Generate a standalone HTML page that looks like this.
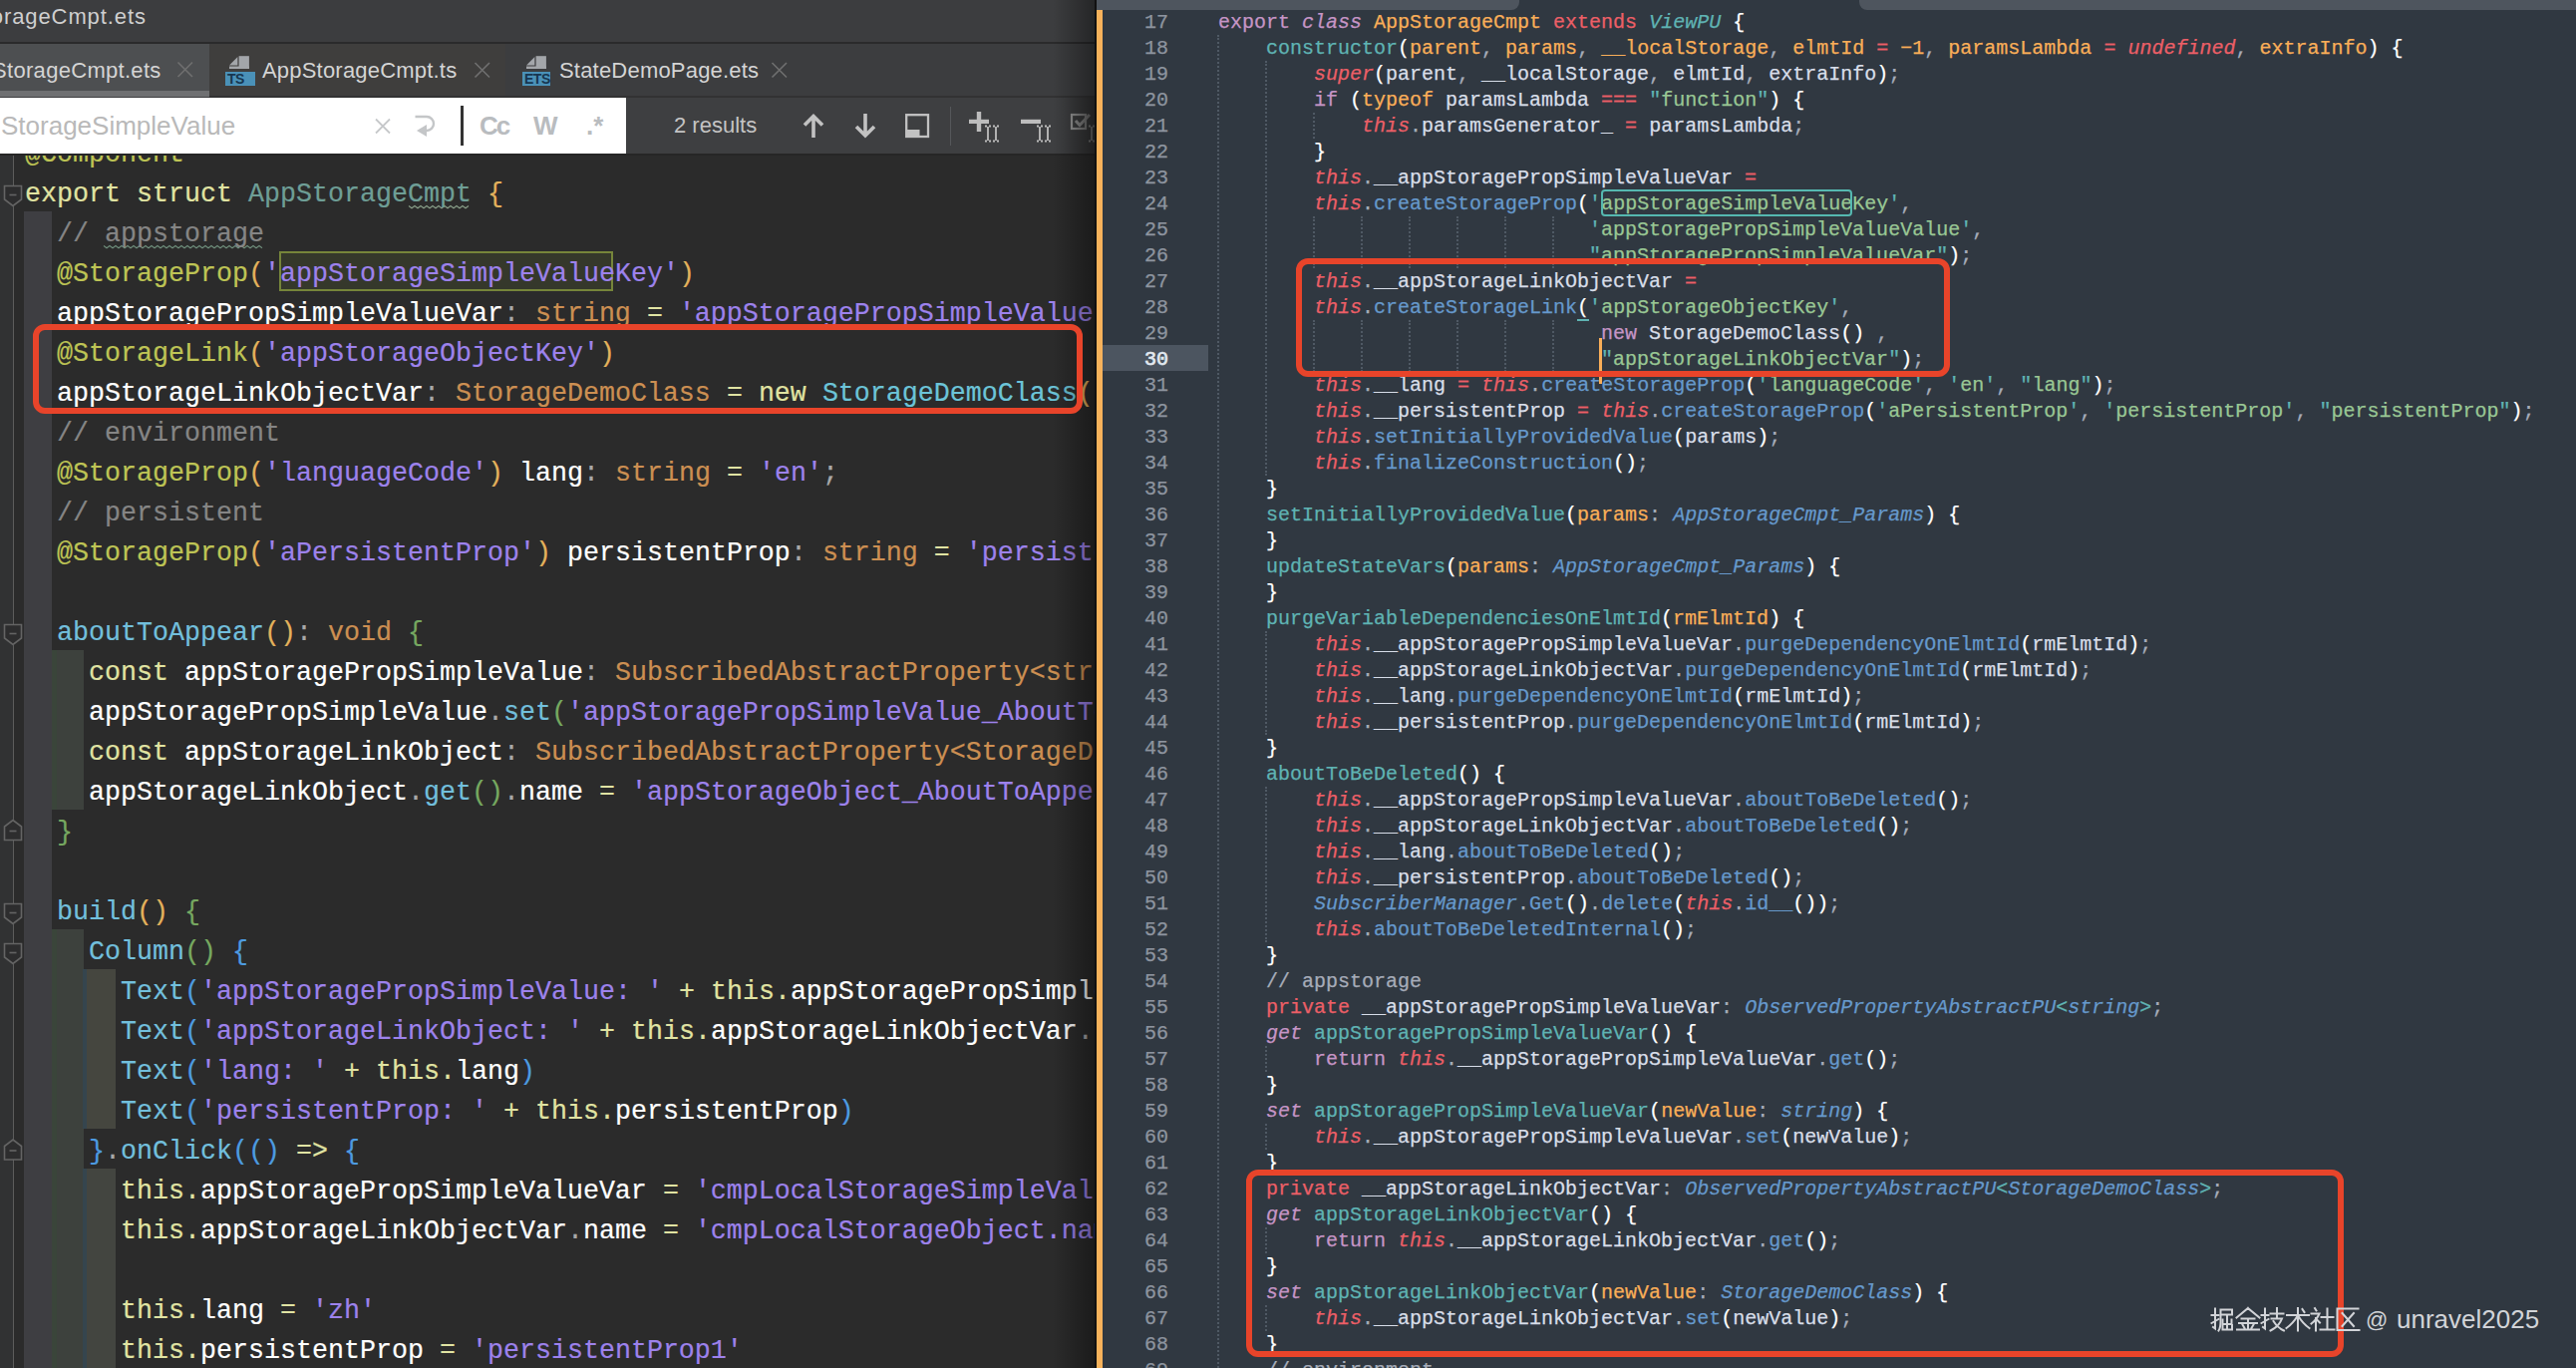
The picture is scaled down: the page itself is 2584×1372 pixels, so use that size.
<!DOCTYPE html><html><head><meta charset="utf-8"><style>
*{margin:0;padding:0;box-sizing:border-box}
html,body{width:2584px;height:1372px;overflow:hidden;background:#2b2b2b}
body{position:relative;font-family:"Liberation Sans",sans-serif}
.abs{position:absolute}
i{font-style:normal}
/* left */
#lp{position:absolute;left:0;top:0;width:1098px;height:1372px;overflow:hidden;background:#2b2b2b}
#rp{position:absolute;left:1098px;top:0;width:1486px;height:1372px;overflow:hidden;background:#303841}
.ll{position:absolute;left:25px;height:40px;line-height:40px;font-family:"Liberation Mono",monospace;font-size:26.667px;white-space:pre;color:#ffffff;-webkit-text-stroke:0.2px currentColor;transform:scaleY(1.05);transform-origin:0 27.1px}
.rl{position:absolute;left:124px;height:26px;line-height:26px;font-family:"Liberation Mono",monospace;font-size:20px;white-space:pre;color:#d8dee9;-webkit-text-stroke:0.25px currentColor}
.rn{position:absolute;left:0;width:74px;text-align:right;height:26px;line-height:26px;font-family:"Liberation Mono",monospace;font-size:20px;color:#8d949f;-webkit-text-stroke:0.25px currentColor}
/* left tokens */
.ll .ky{color:#e0e3a2}
.ll .an{color:#bec455}
.ll .st{color:#9d82ec}
.ll .pu{color:#a8a8a8}
.ll .ty{color:#cc8f52}
.ll .fn{color:#72bfdc}
.ll .cl{color:#6cc4d8}
.ll .sc{color:#6e9e96}
.ll .cm{color:#858585}
.ll .b1{color:#e3b15c}
.ll .b2{color:#76a860}
.ll .b3{color:#4d9be0}
/* right tokens */
.rl .pk{color:#c695c6}
.rl .pki{color:#c695c6;font-style:italic}
.rl .rd{color:#ec5f67}
.rl .rdi{color:#ec5f67;font-style:italic}
.rl .or{color:#f9ae58}
.rl .cy{color:#5fb3b3}
.rl .cyi{color:#5fb3b3;font-style:italic}
.rl .bl{color:#6699cc}
.rl .bli{color:#6699cc;font-style:italic}
.rl .gr{color:#99c794}
.rl .wb{color:#ffffff}
.rl .gy{color:#a6acb9}
.rl .cm{color:#a6acb9}
.redbox{position:absolute;border:6.5px solid #e8442a;border-radius:12px}
.guide{position:absolute;width:0;border-left:2px dotted #4f5964}
</style></head><body><div id="lp">
<div class="abs" style="left:0;top:0;width:1098px;height:43px;background:#3c3d3f"></div>
<div class="abs" style="left:0;top:42px;width:1098px;height:2px;background:#2a2a2b"></div>
<div class="abs" style="left:-73.6px;top:4px;font-size:22px;line-height:26px;color:#cfcfcf;letter-spacing:0.9px">AppStorageCmpt.ets</div>
<div class="abs" style="left:0;top:44px;width:1098px;height:54px;background:#3c3d3f"></div>
<div class="abs" style="left:210px;top:44px;width:297px;height:53px;background:#3f3e3d"></div>
<div class="abs" style="left:0;top:44px;width:210px;height:47px;background:#4d4f51"></div>
<div class="abs" style="left:0;top:91px;width:210px;height:6px;background:#6f7072"></div>
<div class="abs" style="left:-48px;top:58px;font-size:22px;line-height:26px;color:#d4d4d4;letter-spacing:0.3px">AppStorageCmpt.ets</div>
<svg class="abs" style="left:0;top:0" width="1098" height="100" viewBox="0 0 1098 100"><path d="M178.5 62.5 L193.0 77.0 M193.0 62.5 L178.5 77.0" stroke="#6f6f6f" stroke-width="1.6"/></svg>
<svg class="abs" style="left:226px;top:54px" width="32" height="34" viewBox="0 0 32 34"><g fill="#a3a6aa"><rect x="13.6" y="2.2" width="10.3" height="12.8"/><polygon points="4,11.6 12.4,3 12.4,11.6"/><rect x="4" y="12.5" width="20" height="2.5"/></g></svg><div class="abs" style="left:226px;top:72px;width:30px;height:14px;background:#4a91b8;color:#173650;font-size:14px;line-height:15px;font-weight:bold;padding-left:2px;letter-spacing:-0.5px">TS</div>
<div class="abs" style="left:263px;top:58px;font-size:22px;line-height:26px;color:#d4d4d4;letter-spacing:0.2px">AppStorageCmpt.ts</div>
<svg class="abs" style="left:0;top:0" width="1098" height="100" viewBox="0 0 1098 100"><path d="M476.5 63.0 L491.0 77.5 M491.0 63.0 L476.5 77.5" stroke="#6f6f6f" stroke-width="1.6"/></svg>
<svg class="abs" style="left:524px;top:54px" width="32" height="34" viewBox="0 0 32 34"><g fill="#a3a6aa"><rect x="13.6" y="2.2" width="10.3" height="12.8"/><polygon points="4,11.6 12.4,3 12.4,11.6"/><rect x="4" y="12.5" width="20" height="2.5"/></g></svg><div class="abs" style="left:524px;top:72px;width:28px;height:14px;background:#4a91b8;color:#173650;font-size:14px;line-height:15px;font-weight:bold;padding-left:2px;letter-spacing:-0.5px">ETS</div>
<div class="abs" style="left:561px;top:58px;font-size:22px;line-height:26px;color:#d4d4d4;letter-spacing:0.2px">StateDemoPage.ets</div>
<svg class="abs" style="left:0;top:0" width="1098" height="100" viewBox="0 0 1098 100"><path d="M774.5 63.0 L789.0 77.5 M789.0 63.0 L774.5 77.5" stroke="#6f6f6f" stroke-width="1.6"/></svg>
<div class="abs" style="left:210px;top:96px;width:888px;height:2px;background:#323233"></div>
<div class="abs" style="left:0;top:98px;width:1098px;height:56px;background:#3e3f41"></div>
<div class="abs" style="left:0;top:98px;width:628px;height:56px;background:#ffffff"></div>
<div class="abs" style="left:1px;top:111px;font-size:26px;line-height:30px;color:#b9b9b9">StorageSimpleValue</div>
<svg class="abs" style="left:0;top:0" width="1098" height="154" viewBox="0 0 1098 154"><g stroke="#c6c8ca" stroke-width="1.8" fill="none"><path d="M377 119.5 L391 133.5 M391 119.5 L377 133.5"/></g><g stroke="#c4c6c8" stroke-width="2.4" fill="none"><path d="M416.5 117 H428 A7 7 0 0 1 428 131 H424"/></g><path d="M418 131 L428 125 L428 137 Z" fill="#c4c6c8"/><g stroke="#c2c2c2" stroke-width="3.6" fill="none" stroke-linecap="butt"><path d="M816 116.5 V138 M807 125.5 L816 116.5 L825 125.5"/><path d="M868 114 V135.5 M859 127 L868 136 L877 127"/></g><rect x="909.2" y="115.2" width="21.8" height="21.8" stroke="#c2c2c2" stroke-width="2.3" fill="none"/><rect x="909" y="130" width="13.5" height="7.5" fill="#c2c2c2"/><g fill="#bdbdbd"><rect x="972" y="119.8" width="20" height="4.2"/><rect x="979.8" y="112" width="4.4" height="20"/><rect x="1024" y="119.8" width="20" height="4.2"/></g><g stroke="#bdbdbd" stroke-width="1.8" fill="none"><path d="M991 127 V141 M999 127 V141 M1043 127 V141 M1051 127 V141 M1095 127 V141"/></g><g fill="#bdbdbd"><rect x="988.0" y="125.5" width="2" height="2"/><rect x="988.0" y="140.5" width="2" height="2"/><rect x="992.0" y="125.5" width="2" height="2"/><rect x="992.0" y="140.5" width="2" height="2"/><rect x="996.0" y="125.5" width="2" height="2"/><rect x="996.0" y="140.5" width="2" height="2"/><rect x="1000.0" y="125.5" width="2" height="2"/><rect x="1000.0" y="140.5" width="2" height="2"/><rect x="1040.0" y="125.5" width="2" height="2"/><rect x="1040.0" y="140.5" width="2" height="2"/><rect x="1044.0" y="125.5" width="2" height="2"/><rect x="1044.0" y="140.5" width="2" height="2"/><rect x="1048.0" y="125.5" width="2" height="2"/><rect x="1048.0" y="140.5" width="2" height="2"/><rect x="1052.0" y="125.5" width="2" height="2"/><rect x="1052.0" y="140.5" width="2" height="2"/><rect x="1092.0" y="125.5" width="2" height="2"/><rect x="1092.0" y="140.5" width="2" height="2"/><rect x="1096.0" y="125.5" width="2" height="2"/><rect x="1096.0" y="140.5" width="2" height="2"/></g><rect x="1075" y="115" width="14" height="14" stroke="#a9a9a9" stroke-width="2.2" fill="none"/><path d="M1079 121 L1083 125.5 L1093 115" stroke="#a9a9a9" stroke-width="3" fill="none"/></svg>
<div class="abs" style="left:1066px;top:98px;width:32px;height:56px;background:linear-gradient(90deg,rgba(43,43,43,0),rgba(43,43,43,0.6))"></div>
<div class="abs" style="left:462px;top:106px;width:2.5px;height:40px;background:#333"></div>
<div class="abs" style="left:481px;top:111px;font-size:26px;line-height:30px;color:#b9bcbf;font-weight:bold;letter-spacing:-2px">Cc</div>
<div class="abs" style="left:535px;top:111px;font-size:26px;line-height:30px;color:#b9bcbf;font-weight:bold">W</div>
<div class="abs" style="left:588px;top:111px;font-size:26px;line-height:30px;color:#b9bcbf;font-weight:bold">.*</div>
<div class="abs" style="left:676px;top:113px;font-size:22px;line-height:26px;color:#c4c4c4">2 results</div>
<div class="abs" style="left:953px;top:107px;width:1px;height:39px;background:#55575a"></div>
<div class="abs" style="left:0;top:154px;width:13px;height:1218px;background:#313233"></div>
<div class="abs" style="left:12.5px;top:154px;width:1.6px;height:1218px;background:#5c5c5c"></div>
<div class="abs" style="left:24px;top:212px;width:28px;height:1160px;background:#3e3e42"></div>
<div class="abs" style="left:52px;top:652px;width:32px;height:160px;background:#3d413d"></div>
<div class="abs" style="left:52px;top:652px;width:5px;height:160px;background:#3a453a"></div>
<div class="abs" style="left:52px;top:932px;width:32px;height:440px;background:#3d413d"></div>
<div class="abs" style="left:52px;top:932px;width:5px;height:440px;background:#3a453a"></div>
<div class="abs" style="left:84px;top:972px;width:32px;height:160px;background:#45463f"></div>
<div class="abs" style="left:84px;top:1172px;width:32px;height:200px;background:#434540"></div>
<div class="abs" style="left:83px;top:972px;width:4px;height:160px;background:#35454e"></div>
<div class="abs" style="left:83px;top:1172px;width:4px;height:200px;background:#35454e"></div>
<svg class="abs" style="left:0;top:0" width="30" height="1372" viewBox="0 0 30 1372"><polygon points="4.5,186.5 21.5,186.5 21.5,200.0 13,206.5 4.5,200.0" fill="#2d2d2e" stroke="#646464" stroke-width="1.6"/><line x1="9.5" x2="16.5" y1="195.5" y2="195.5" stroke="#646464" stroke-width="1.6"/><polygon points="4.5,626.5 21.5,626.5 21.5,640.0 13,646.5 4.5,640.0" fill="#2d2d2e" stroke="#646464" stroke-width="1.6"/><line x1="9.5" x2="16.5" y1="635.5" y2="635.5" stroke="#646464" stroke-width="1.6"/><polygon points="4.5,842.5 21.5,842.5 21.5,829.0 13,822.5 4.5,829.0" fill="#2d2d2e" stroke="#646464" stroke-width="1.6"/><line x1="9.5" x2="16.5" y1="833.5" y2="833.5" stroke="#646464" stroke-width="1.6"/><polygon points="4.5,906.5 21.5,906.5 21.5,920.0 13,926.5 4.5,920.0" fill="#2d2d2e" stroke="#646464" stroke-width="1.6"/><line x1="9.5" x2="16.5" y1="915.5" y2="915.5" stroke="#646464" stroke-width="1.6"/><polygon points="4.5,946.5 21.5,946.5 21.5,960.0 13,966.5 4.5,960.0" fill="#2d2d2e" stroke="#646464" stroke-width="1.6"/><line x1="9.5" x2="16.5" y1="955.5" y2="955.5" stroke="#646464" stroke-width="1.6"/><polygon points="4.5,1163.0 21.5,1163.0 21.5,1149.5 13,1143.0 4.5,1149.5" fill="#2d2d2e" stroke="#646464" stroke-width="1.6"/><line x1="9.5" x2="16.5" y1="1154.0" y2="1154.0" stroke="#646464" stroke-width="1.6"/></svg>
<div class="abs" style="left:280px;top:252px;width:335px;height:40px;border:2.2px solid #76853a;background:#35382b"></div>
<svg class="abs" style="left:0;top:0" width="1098" height="400" viewBox="0 0 1098 400"><path d="M410.0 206.5 L413.0 208.7 L416.0 206.5 L419.0 208.7 L422.0 206.5 L425.0 208.7 L428.0 206.5 L431.0 208.7 L434.0 206.5 L437.0 208.7 L440.0 206.5 L443.0 208.7 L446.0 206.5 L449.0 208.7 L452.0 206.5 L455.0 208.7 L458.0 206.5 L461.0 208.7 L464.0 206.5 L467.0 208.7 L470.0 206.5" stroke="#8aa08a" stroke-width="1.1" fill="none"/><path d="M104.0 246.5 L107.0 248.7 L110.0 246.5 L113.0 248.7 L116.0 246.5 L119.0 248.7 L122.0 246.5 L125.0 248.7 L128.0 246.5 L131.0 248.7 L134.0 246.5 L137.0 248.7 L140.0 246.5 L143.0 248.7 L146.0 246.5 L149.0 248.7 L152.0 246.5 L155.0 248.7 L158.0 246.5 L161.0 248.7 L164.0 246.5 L167.0 248.7 L170.0 246.5 L173.0 248.7 L176.0 246.5 L179.0 248.7 L182.0 246.5 L185.0 248.7 L188.0 246.5 L191.0 248.7 L194.0 246.5 L197.0 248.7 L200.0 246.5 L203.0 248.7 L206.0 246.5 L209.0 248.7 L212.0 246.5 L215.0 248.7 L218.0 246.5 L221.0 248.7 L224.0 246.5 L227.0 248.7 L230.0 246.5 L233.0 248.7 L236.0 246.5 L239.0 248.7 L242.0 246.5 L245.0 248.7 L248.0 246.5 L251.0 248.7 L254.0 246.5 L257.0 248.7 L260.0 246.5 L263.0 248.7" stroke="#6f8f7c" stroke-width="1.1" fill="none"/></svg>
<div class="abs" style="left:0;top:154px;width:1098px;height:2px;background:#262626"></div>
<div class="abs" style="left:0;top:156px;width:1098px;height:1216px;overflow:hidden">
<div class="ll" style="top:-21.0px"><i class="an">@Component</i></div>
<div class="ll" style="top:19.0px"><i class="ky">export</i> <i class="ky">struct</i> <i class="sc">AppStorageCmpt</i> <i class="b1">{</i></div>
<div class="ll" style="top:59.0px">  <i class="cm">// appstorage</i></div>
<div class="ll" style="top:99.0px">  <i class="an">@StorageProp</i><i class="b1">(</i><i class="st">&#x27;appStorageSimpleValueKey&#x27;</i><i class="b1">)</i></div>
<div class="ll" style="top:139.0px">  appStoragePropSimpleValueVar<i class="pu">:</i> <i class="ty">string</i> <i class="ky">=</i> <i class="st">&#x27;appStoragePropSimpleValue&#x27;</i></div>
<div class="ll" style="top:179.0px">  <i class="an">@StorageLink</i><i class="b1">(</i><i class="st">&#x27;appStorageObjectKey&#x27;</i><i class="b1">)</i></div>
<div class="ll" style="top:219.0px">  appStorageLinkObjectVar<i class="pu">:</i> <i class="ty">StorageDemoClass</i> <i class="ky">=</i> <i class="ky">new</i> <i class="cl">StorageDemoClass</i><i class="b1">()</i></div>
<div class="ll" style="top:259.0px">  <i class="cm">// environment</i></div>
<div class="ll" style="top:299.0px">  <i class="an">@StorageProp</i><i class="b1">(</i><i class="st">&#x27;languageCode&#x27;</i><i class="b1">)</i> lang<i class="pu">:</i> <i class="ty">string</i> <i class="ky">=</i> <i class="st">&#x27;en&#x27;</i><i class="pu">;</i></div>
<div class="ll" style="top:339.0px">  <i class="cm">// persistent</i></div>
<div class="ll" style="top:379.0px">  <i class="an">@StorageProp</i><i class="b1">(</i><i class="st">&#x27;aPersistentProp&#x27;</i><i class="b1">)</i> persistentProp<i class="pu">:</i> <i class="ty">string</i> <i class="ky">=</i> <i class="st">&#x27;persistentProp&#x27;</i></div>
<div class="ll" style="top:419.0px"></div>
<div class="ll" style="top:459.0px">  <i class="fn">aboutToAppear</i><i class="b1">()</i><i class="pu">:</i> <i class="ty">void</i> <i class="b2">{</i></div>
<div class="ll" style="top:499.0px">    <i class="ky">const</i> appStoragePropSimpleValue<i class="pu">:</i> <i class="ty">SubscribedAbstractProperty&lt;string&gt;</i></div>
<div class="ll" style="top:539.0px">    appStoragePropSimpleValue<i class="pu">.</i><i class="fn">set</i><i class="b2">(</i><i class="st">&#x27;appStoragePropSimpleValue_AboutToAppear&#x27;</i><i class="b2">)</i></div>
<div class="ll" style="top:579.0px">    <i class="ky">const</i> appStorageLinkObject<i class="pu">:</i> <i class="ty">SubscribedAbstractProperty&lt;StorageDemoClass&gt;</i></div>
<div class="ll" style="top:619.0px">    appStorageLinkObject<i class="pu">.</i><i class="fn">get</i><i class="b2">()</i><i class="pu">.</i>name <i class="ky">=</i> <i class="st">&#x27;appStorageObject_AboutToAppear&#x27;</i></div>
<div class="ll" style="top:659.0px">  <i class="b2">}</i></div>
<div class="ll" style="top:699.0px"></div>
<div class="ll" style="top:739.0px">  <i class="fn">build</i><i class="b1">()</i> <i class="b2">{</i></div>
<div class="ll" style="top:779.0px">    <i class="fn">Column</i><i class="b2">()</i> <i class="b3">{</i></div>
<div class="ll" style="top:819.0px">      <i class="fn">Text</i><i class="b3">(</i><i class="st">&#x27;appStoragePropSimpleValue: &#x27;</i> <i class="ky">+</i> <i class="ky">this.</i>appStoragePropSimpleValueVar<i class="b3">)</i></div>
<div class="ll" style="top:859.0px">      <i class="fn">Text</i><i class="b3">(</i><i class="st">&#x27;appStorageLinkObject: &#x27;</i> <i class="ky">+</i> <i class="ky">this.</i>appStorageLinkObjectVar<i class="pu">.</i>name<i class="b3">)</i></div>
<div class="ll" style="top:899.0px">      <i class="fn">Text</i><i class="b3">(</i><i class="st">&#x27;lang: &#x27;</i> <i class="ky">+</i> <i class="ky">this.</i>lang<i class="b3">)</i></div>
<div class="ll" style="top:939.0px">      <i class="fn">Text</i><i class="b3">(</i><i class="st">&#x27;persistentProp: &#x27;</i> <i class="ky">+</i> <i class="ky">this.</i>persistentProp<i class="b3">)</i></div>
<div class="ll" style="top:979.0px">    <i class="b3">}</i><i class="pu">.</i><i class="fn">onClick</i><i class="b3">(()</i> <i class="ky">=&gt;</i> <i class="b3">{</i></div>
<div class="ll" style="top:1019.0px">      <i class="ky">this.</i>appStoragePropSimpleValueVar <i class="ky">=</i> <i class="st">&#x27;cmpLocalStorageSimpleValue&#x27;</i></div>
<div class="ll" style="top:1059.0px">      <i class="ky">this.</i>appStorageLinkObjectVar<i class="pu">.</i>name <i class="ky">=</i> <i class="st">&#x27;cmpLocalStorageObject.name&#x27;</i></div>
<div class="ll" style="top:1099.0px"></div>
<div class="ll" style="top:1139.0px">      <i class="ky">this.</i>lang <i class="ky">=</i> <i class="st">&#x27;zh&#x27;</i></div>
<div class="ll" style="top:1179.0px">      <i class="ky">this.</i>persistentProp <i class="ky">=</i> <i class="st">&#x27;persistentProp1&#x27;</i></div>
</div>
<div class="abs" style="left:1056px;top:0px;width:42px;height:1372px;background:linear-gradient(90deg,rgba(0,0,0,0),rgba(0,0,0,0.38))"></div>
<div class="redbox" style="left:33px;top:325px;width:1053px;height:90px"></div>
</div>
<div id="rp">
<div class="abs" style="left:0;top:0;width:2px;height:1372px;background:#111"></div>
<div class="abs" style="left:2px;top:0;width:6px;height:1372px;background:#f7b25b"></div>
<div class="abs" style="left:2px;top:0;width:424px;height:9.5px;background:#4e555e;border-bottom-right-radius:8px"></div>
<div class="abs" style="left:767px;top:0;width:800px;height:9.5px;background:#4e555e;border-bottom-left-radius:8px"></div>
<div class="abs" style="left:8px;top:346.3px;width:106px;height:26px;background:#4c5560"></div>
<div class="rn" style="top:10.2px;color:#8d949f">17</div>
<div class="rn" style="top:36.2px;color:#8d949f">18</div>
<div class="rn" style="top:62.2px;color:#8d949f">19</div>
<div class="rn" style="top:88.2px;color:#8d949f">20</div>
<div class="rn" style="top:114.2px;color:#8d949f">21</div>
<div class="rn" style="top:140.2px;color:#8d949f">22</div>
<div class="rn" style="top:166.2px;color:#8d949f">23</div>
<div class="rn" style="top:192.2px;color:#8d949f">24</div>
<div class="rn" style="top:218.2px;color:#8d949f">25</div>
<div class="rn" style="top:244.2px;color:#8d949f">26</div>
<div class="rn" style="top:270.2px;color:#8d949f">27</div>
<div class="rn" style="top:296.2px;color:#8d949f">28</div>
<div class="rn" style="top:322.2px;color:#8d949f">29</div>
<div class="rn" style="top:348.2px;color:#e2e9f0;-webkit-text-stroke:0.7px #e2e9f0">30</div>
<div class="rn" style="top:374.2px;color:#8d949f">31</div>
<div class="rn" style="top:400.2px;color:#8d949f">32</div>
<div class="rn" style="top:426.2px;color:#8d949f">33</div>
<div class="rn" style="top:452.2px;color:#8d949f">34</div>
<div class="rn" style="top:478.2px;color:#8d949f">35</div>
<div class="rn" style="top:504.2px;color:#8d949f">36</div>
<div class="rn" style="top:530.2px;color:#8d949f">37</div>
<div class="rn" style="top:556.2px;color:#8d949f">38</div>
<div class="rn" style="top:582.2px;color:#8d949f">39</div>
<div class="rn" style="top:608.2px;color:#8d949f">40</div>
<div class="rn" style="top:634.2px;color:#8d949f">41</div>
<div class="rn" style="top:660.2px;color:#8d949f">42</div>
<div class="rn" style="top:686.2px;color:#8d949f">43</div>
<div class="rn" style="top:712.2px;color:#8d949f">44</div>
<div class="rn" style="top:738.2px;color:#8d949f">45</div>
<div class="rn" style="top:764.2px;color:#8d949f">46</div>
<div class="rn" style="top:790.2px;color:#8d949f">47</div>
<div class="rn" style="top:816.2px;color:#8d949f">48</div>
<div class="rn" style="top:842.2px;color:#8d949f">49</div>
<div class="rn" style="top:868.2px;color:#8d949f">50</div>
<div class="rn" style="top:894.2px;color:#8d949f">51</div>
<div class="rn" style="top:920.2px;color:#8d949f">52</div>
<div class="rn" style="top:946.2px;color:#8d949f">53</div>
<div class="rn" style="top:972.2px;color:#8d949f">54</div>
<div class="rn" style="top:998.2px;color:#8d949f">55</div>
<div class="rn" style="top:1024.2px;color:#8d949f">56</div>
<div class="rn" style="top:1050.2px;color:#8d949f">57</div>
<div class="rn" style="top:1076.2px;color:#8d949f">58</div>
<div class="rn" style="top:1102.2px;color:#8d949f">59</div>
<div class="rn" style="top:1128.2px;color:#8d949f">60</div>
<div class="rn" style="top:1154.2px;color:#8d949f">61</div>
<div class="rn" style="top:1180.2px;color:#8d949f">62</div>
<div class="rn" style="top:1206.2px;color:#8d949f">63</div>
<div class="rn" style="top:1232.2px;color:#8d949f">64</div>
<div class="rn" style="top:1258.2px;color:#8d949f">65</div>
<div class="rn" style="top:1284.2px;color:#8d949f">66</div>
<div class="rn" style="top:1310.2px;color:#8d949f">67</div>
<div class="rn" style="top:1336.2px;color:#8d949f">68</div>
<div class="rn" style="top:1362.2px;color:#8d949f">69</div>
<div class="guide" style="left:123px;top:35px;height:1352px"></div>
<div class="guide" style="left:171px;top:61px;height:416px"></div>
<div class="guide" style="left:219px;top:113px;height:26px"></div>
<div class="guide" style="left:219px;top:217px;height:52px"></div>
<div class="guide" style="left:219px;top:321px;height:52px"></div>
<div class="guide" style="left:267px;top:217px;height:52px"></div>
<div class="guide" style="left:267px;top:321px;height:52px"></div>
<div class="guide" style="left:315px;top:217px;height:52px"></div>
<div class="guide" style="left:315px;top:321px;height:52px"></div>
<div class="guide" style="left:363px;top:217px;height:52px"></div>
<div class="guide" style="left:363px;top:321px;height:52px"></div>
<div class="guide" style="left:411px;top:217px;height:52px"></div>
<div class="guide" style="left:411px;top:321px;height:52px"></div>
<div class="guide" style="left:459px;top:217px;height:52px"></div>
<div class="guide" style="left:459px;top:321px;height:52px"></div>
<div class="guide" style="left:171px;top:633px;height:104px"></div>
<div class="guide" style="left:171px;top:789px;height:156px"></div>
<div class="guide" style="left:171px;top:1049px;height:26px"></div>
<div class="guide" style="left:171px;top:1127px;height:26px"></div>
<div class="guide" style="left:171px;top:1231px;height:26px"></div>
<div class="guide" style="left:171px;top:1309px;height:26px"></div>
<div class="rl" style="top:9.8px"><i class="pk">export</i> <i class="pki">class</i> <i class="or">AppStorageCmpt</i> <i class="rd">extends</i> <i class="cyi">ViewPU</i> <i class="wb">{</i></div>
<div class="rl" style="top:35.8px">    <i class="cy">constructor</i><i class="wb">(</i><i class="or">parent</i><i class="gy">,</i> <i class="or">params</i><i class="gy">,</i> <i class="or">__localStorage</i><i class="gy">,</i> <i class="or">elmtId</i> <i class="rd">=</i> <i class="or">−1</i><i class="gy">,</i> <i class="or">paramsLambda</i> <i class="rd">=</i> <i class="rdi">undefined</i><i class="gy">,</i> <i class="or">extraInfo</i><i class="wb">)</i> <i class="wb">{</i></div>
<div class="rl" style="top:61.8px">        <i class="rdi">super</i><i class="wb">(</i>parent<i class="gy">,</i> __localStorage<i class="gy">,</i> elmtId<i class="gy">,</i> extraInfo<i class="wb">)</i><i class="gy">;</i></div>
<div class="rl" style="top:87.8px">        <i class="pk">if</i> <i class="wb">(</i><i class="or">typeof</i> paramsLambda <i class="rd">===</i> <i class="cy">&quot;</i><i class="gr">function</i><i class="cy">&quot;</i><i class="wb">)</i> <i class="wb">{</i></div>
<div class="rl" style="top:113.8px">            <i class="rdi">this</i><i class="gy">.</i>paramsGenerator_ <i class="rd">=</i> paramsLambda<i class="gy">;</i></div>
<div class="rl" style="top:139.8px">        <i class="wb">}</i></div>
<div class="rl" style="top:165.8px">        <i class="rdi">this</i><i class="gy">.</i>__appStoragePropSimpleValueVar <i class="rd">=</i></div>
<div class="rl" style="top:191.8px">        <i class="rdi">this</i><i class="gy">.</i><i class="bl">createStorageProp</i><i class="wb">(</i><i class="cy">&#x27;</i><i class="gr">appStorageSimpleValueKey</i><i class="cy">&#x27;</i><i class="gy">,</i></div>
<div class="rl" style="top:217.8px">                               <i class="cy">&#x27;</i><i class="gr">appStoragePropSimpleValueValue</i><i class="cy">&#x27;</i><i class="gy">,</i></div>
<div class="rl" style="top:243.8px">                               <i class="cy">&quot;</i><i class="gr">appStoragePropSimpleValueVar</i><i class="cy">&quot;</i><i class="wb">)</i><i class="gy">;</i></div>
<div class="rl" style="top:269.8px">        <i class="rdi">this</i><i class="gy">.</i>__appStorageLinkObjectVar <i class="rd">=</i></div>
<div class="rl" style="top:295.8px">        <i class="rdi">this</i><i class="gy">.</i><i class="bl">createStorageLink</i><i class="wb">(</i><i class="cy">&#x27;</i><i class="gr">appStorageObjectKey</i><i class="cy">&#x27;</i><i class="gy">,</i></div>
<div class="rl" style="top:321.8px">                                <i class="pk">new</i> StorageDemoClass<i class="wb">()</i> <i class="gy">,</i></div>
<div class="rl" style="top:347.8px">                                <i class="cy">&quot;</i><i class="gr">appStorageLinkObjectVar</i><i class="cy">&quot;</i><i class="wb">)</i><i class="gy">;</i></div>
<div class="rl" style="top:373.8px">        <i class="rdi">this</i><i class="gy">.</i>__lang <i class="rd">=</i> <i class="rdi">this</i><i class="gy">.</i><i class="bl">createStorageProp</i><i class="wb">(</i><i class="cy">&#x27;</i><i class="gr">languageCode</i><i class="cy">&#x27;</i><i class="gy">,</i> <i class="cy">&#x27;</i><i class="gr">en</i><i class="cy">&#x27;</i><i class="gy">,</i> <i class="cy">&quot;</i><i class="gr">lang</i><i class="cy">&quot;</i><i class="wb">)</i><i class="gy">;</i></div>
<div class="rl" style="top:399.8px">        <i class="rdi">this</i><i class="gy">.</i>__persistentProp <i class="rd">=</i> <i class="rdi">this</i><i class="gy">.</i><i class="bl">createStorageProp</i><i class="wb">(</i><i class="cy">&#x27;</i><i class="gr">aPersistentProp</i><i class="cy">&#x27;</i><i class="gy">,</i> <i class="cy">&#x27;</i><i class="gr">persistentProp</i><i class="cy">&#x27;</i><i class="gy">,</i> <i class="cy">&quot;</i><i class="gr">persistentProp</i><i class="cy">&quot;</i><i class="wb">)</i><i class="gy">;</i></div>
<div class="rl" style="top:425.8px">        <i class="rdi">this</i><i class="gy">.</i><i class="bl">setInitiallyProvidedValue</i><i class="wb">(</i>params<i class="wb">)</i><i class="gy">;</i></div>
<div class="rl" style="top:451.8px">        <i class="rdi">this</i><i class="gy">.</i><i class="bl">finalizeConstruction</i><i class="wb">()</i><i class="gy">;</i></div>
<div class="rl" style="top:477.8px">    <i class="wb">}</i></div>
<div class="rl" style="top:503.8px">    <i class="cy">setInitiallyProvidedValue</i><i class="wb">(</i><i class="or">params</i><i class="gy">:</i> <i class="bli">AppStorageCmpt_Params</i><i class="wb">)</i> <i class="wb">{</i></div>
<div class="rl" style="top:529.8px">    <i class="wb">}</i></div>
<div class="rl" style="top:555.8px">    <i class="cy">updateStateVars</i><i class="wb">(</i><i class="or">params</i><i class="gy">:</i> <i class="bli">AppStorageCmpt_Params</i><i class="wb">)</i> <i class="wb">{</i></div>
<div class="rl" style="top:581.8px">    <i class="wb">}</i></div>
<div class="rl" style="top:607.8px">    <i class="cy">purgeVariableDependenciesOnElmtId</i><i class="wb">(</i><i class="or">rmElmtId</i><i class="wb">)</i> <i class="wb">{</i></div>
<div class="rl" style="top:633.8px">        <i class="rdi">this</i><i class="gy">.</i>__appStoragePropSimpleValueVar<i class="gy">.</i><i class="bl">purgeDependencyOnElmtId</i><i class="wb">(</i>rmElmtId<i class="wb">)</i><i class="gy">;</i></div>
<div class="rl" style="top:659.8px">        <i class="rdi">this</i><i class="gy">.</i>__appStorageLinkObjectVar<i class="gy">.</i><i class="bl">purgeDependencyOnElmtId</i><i class="wb">(</i>rmElmtId<i class="wb">)</i><i class="gy">;</i></div>
<div class="rl" style="top:685.8px">        <i class="rdi">this</i><i class="gy">.</i>__lang<i class="gy">.</i><i class="bl">purgeDependencyOnElmtId</i><i class="wb">(</i>rmElmtId<i class="wb">)</i><i class="gy">;</i></div>
<div class="rl" style="top:711.8px">        <i class="rdi">this</i><i class="gy">.</i>__persistentProp<i class="gy">.</i><i class="bl">purgeDependencyOnElmtId</i><i class="wb">(</i>rmElmtId<i class="wb">)</i><i class="gy">;</i></div>
<div class="rl" style="top:737.8px">    <i class="wb">}</i></div>
<div class="rl" style="top:763.8px">    <i class="cy">aboutToBeDeleted</i><i class="wb">()</i> <i class="wb">{</i></div>
<div class="rl" style="top:789.8px">        <i class="rdi">this</i><i class="gy">.</i>__appStoragePropSimpleValueVar<i class="gy">.</i><i class="bl">aboutToBeDeleted</i><i class="wb">()</i><i class="gy">;</i></div>
<div class="rl" style="top:815.8px">        <i class="rdi">this</i><i class="gy">.</i>__appStorageLinkObjectVar<i class="gy">.</i><i class="bl">aboutToBeDeleted</i><i class="wb">()</i><i class="gy">;</i></div>
<div class="rl" style="top:841.8px">        <i class="rdi">this</i><i class="gy">.</i>__lang<i class="gy">.</i><i class="bl">aboutToBeDeleted</i><i class="wb">()</i><i class="gy">;</i></div>
<div class="rl" style="top:867.8px">        <i class="rdi">this</i><i class="gy">.</i>__persistentProp<i class="gy">.</i><i class="bl">aboutToBeDeleted</i><i class="wb">()</i><i class="gy">;</i></div>
<div class="rl" style="top:893.8px">        <i class="bli">SubscriberManager</i><i class="gy">.</i><i class="bl">Get</i><i class="wb">()</i><i class="gy">.</i><i class="bl">delete</i><i class="wb">(</i><i class="rdi">this</i><i class="gy">.</i><i class="bl">id__</i><i class="wb">())</i><i class="gy">;</i></div>
<div class="rl" style="top:919.8px">        <i class="rdi">this</i><i class="gy">.</i><i class="bl">aboutToBeDeletedInternal</i><i class="wb">()</i><i class="gy">;</i></div>
<div class="rl" style="top:945.8px">    <i class="wb">}</i></div>
<div class="rl" style="top:971.8px">    <i class="cm">// appstorage</i></div>
<div class="rl" style="top:997.8px">    <i class="rd">private</i> __appStoragePropSimpleValueVar<i class="gy">:</i> <i class="bli">ObservedPropertyAbstractPU</i><i class="cyi">&lt;</i><i class="bli">string</i><i class="cyi">&gt;</i><i class="gy">;</i></div>
<div class="rl" style="top:1023.8px">    <i class="pki">get</i> <i class="cy">appStoragePropSimpleValueVar</i><i class="wb">()</i> <i class="wb">{</i></div>
<div class="rl" style="top:1049.8px">        <i class="pk">return</i> <i class="rdi">this</i><i class="gy">.</i>__appStoragePropSimpleValueVar<i class="gy">.</i><i class="bl">get</i><i class="wb">()</i><i class="gy">;</i></div>
<div class="rl" style="top:1075.8px">    <i class="wb">}</i></div>
<div class="rl" style="top:1101.8px">    <i class="pki">set</i> <i class="cy">appStoragePropSimpleValueVar</i><i class="wb">(</i><i class="or">newValue</i><i class="gy">:</i> <i class="bli">string</i><i class="wb">)</i> <i class="wb">{</i></div>
<div class="rl" style="top:1127.8px">        <i class="rdi">this</i><i class="gy">.</i>__appStoragePropSimpleValueVar<i class="gy">.</i><i class="bl">set</i><i class="wb">(</i>newValue<i class="wb">)</i><i class="gy">;</i></div>
<div class="rl" style="top:1153.8px">    <i class="wb">}</i></div>
<div class="rl" style="top:1179.8px">    <i class="rd">private</i> __appStorageLinkObjectVar<i class="gy">:</i> <i class="bli">ObservedPropertyAbstractPU</i><i class="cyi">&lt;</i><i class="bli">StorageDemoClass</i><i class="cyi">&gt;</i><i class="gy">;</i></div>
<div class="rl" style="top:1205.8px">    <i class="pki">get</i> <i class="cy">appStorageLinkObjectVar</i><i class="wb">()</i> <i class="wb">{</i></div>
<div class="rl" style="top:1231.8px">        <i class="pk">return</i> <i class="rdi">this</i><i class="gy">.</i>__appStorageLinkObjectVar<i class="gy">.</i><i class="bl">get</i><i class="wb">()</i><i class="gy">;</i></div>
<div class="rl" style="top:1257.8px">    <i class="wb">}</i></div>
<div class="rl" style="top:1283.8px">    <i class="pki">set</i> <i class="cy">appStorageLinkObjectVar</i><i class="wb">(</i><i class="or">newValue</i><i class="gy">:</i> <i class="bli">StorageDemoClass</i><i class="wb">)</i> <i class="wb">{</i></div>
<div class="rl" style="top:1309.8px">        <i class="rdi">this</i><i class="gy">.</i>__appStorageLinkObjectVar<i class="gy">.</i><i class="bl">set</i><i class="wb">(</i>newValue<i class="wb">)</i><i class="gy">;</i></div>
<div class="rl" style="top:1335.8px">    <i class="wb">}</i></div>
<div class="rl" style="top:1361.8px">    <i class="cm">// environment</i></div>
<div class="abs" style="left:508px;top:190px;width:252px;height:27px;border:2px solid #55b8b0;border-radius:4px"></div>
<div class="abs" style="left:484px;top:320px;width:12px;height:2px;background:#5fb3b3"></div>
<div class="abs" style="left:506px;top:339px;width:3px;height:46px;background:#f9ae58"></div>
<div class="redbox" style="left:202px;top:259px;width:656px;height:119px"></div>
<div class="redbox" style="left:152px;top:1173px;width:1101px;height:188px"></div>
<div class="abs" style="left:1275px;top:1311px;font-size:22px;line-height:26px;color:#d2d4d8">@</div>
<div class="abs" style="left:1306px;top:1308px;font-size:26px;line-height:30px;color:#d2d4d8">unravel2025</div>
<svg class="abs" style="left:0;top:0" width="1486" height="1372" viewBox="0 0 1486 1372"><g stroke="#d2d4d8" stroke-width="2" fill="none" stroke-linecap="square"><g transform="translate(1120.0,1311.5)"><path d="M0.5 7.5 H7.5 M4 1 V21 L2 19.5 M0.5 15.5 L7.5 11.5"/><path d="M9.5 2 H21 V7 H9.5 M9.5 2 V14 Q9.5 20 7.5 23"/><path d="M16 8.5 V21.5 M11.5 12 V16.5 H20.5 V12 M11.5 17.5 V22 H21 V17.5"/></g><g transform="translate(1145.0,1311.5)"><path d="M12 0.5 L0.5 10 M12 0.5 L23.5 10 M5.5 11 H18.5 M3 15.5 H21 M12 11 V22 M1 22 H23 M6.5 17 L8.5 20.5 M17.5 17 L15.5 20.5"/></g><g transform="translate(1170.0,1311.5)"><path d="M0.5 7.5 H7.5 M4 1 V21 L2 19.5 M0.5 15.5 L7.5 11.5"/><path d="M9.5 6 H22.5 M16 0.5 V10.5 M10.5 11 H21 Q18 19 9.5 23 M12.5 13.5 Q16 20 23 23"/></g><g transform="translate(1195.0,1311.5)"><path d="M1 7.5 H23 M12 0.5 V23 M11.5 8.5 Q7 16 0.5 20.5 M12.5 8.5 Q17 16 23.5 20.5 M16.5 1.5 L18.5 4.5"/></g><g transform="translate(1220.0,1311.5)"><path d="M4 0.5 L5.5 3 M0.5 6 H8.5 Q6 12 0.5 16 M5 10.5 V23 M6 12 L9 15"/><path d="M10.5 9.5 H22.5 M16.5 1 V22 M9.5 22 H23.5"/></g><g transform="translate(1245.0,1311.5)"><path d="M22.5 1 H1.5 V22.5 H23.5 M6.5 5.5 L18 18.5 M18 5.5 L6.5 18.5"/></g></g></svg>
</div></body></html>
